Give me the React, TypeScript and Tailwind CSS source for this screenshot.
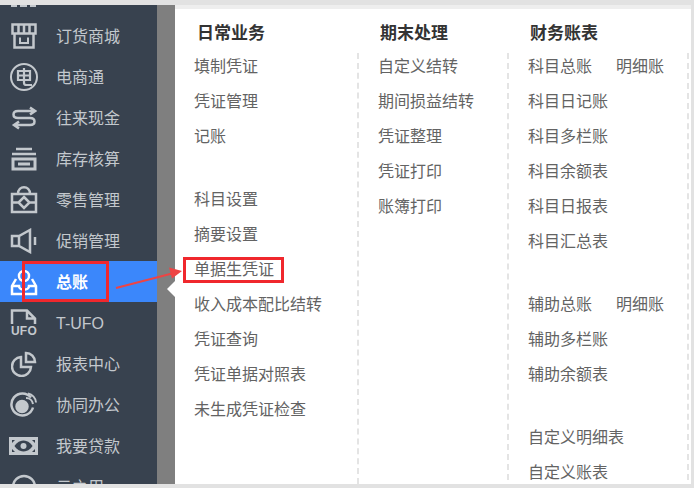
const font = "[font-family:'Liberation_Sans','Noto_Sans_CJK_SC',sans-serif]";

const sw = { fill: "none", stroke: "currentColor", strokeWidth: 2.5 };

const icons: Record<string, React.ReactNode> = {
  shop: (
    <svg width="26" height="26" viewBox="0 0 26 26" {...sw}>
      <path d="M1.500 1.500h23v9h-23zM7.500 1.500v9M13 1.500v9M18.500 1.500v9" />
      <path d="M3.500 10v14.500h19V10" />
      <path d="M9 14.500v5.500h8v-5.500" strokeWidth="2" />
    </svg>
  ),
  dian: (
    <svg width="30" height="28" viewBox="0 0 30 28" fill="none" stroke="currentColor" strokeWidth="2">
      <circle cx="15" cy="14" r="13" />
      <path d="M9 8h12v9H9zM9 12.500h12M15 5v15c0 1.500 1 2 2.500 2H23" strokeWidth="2.200" />
    </svg>
  ),
  swap: (
    <svg width="26" height="24" viewBox="0 0 26 24" fill="none" stroke="currentColor" strokeWidth="2.500">
      <path d="M19 1.500l5 3.500-5 3.500M24 5H7c-6 0-6 7 0 7h12c6 0 6 7 0 7H3M8 15.500L3 19l5 3.500" />
    </svg>
  ),
  stock: (
    <svg width="26" height="24" viewBox="0 0 26 24" {...sw}>
      <path d="M5 2h16M1 7h24" />
      <path d="M2 12h22v10H2zM7 17h12" strokeWidth="3" />
    </svg>
  ),
  retail: (
    <svg width="28" height="28" viewBox="0 0 28 28" {...sw}>
      <path d="M2 8h24v18H2zM8 8c0-9 12-9 12 0" />
      <path d="M14 11l5.500 5.500L14 22l-5.500-5.500zM2 16.500h6M20 16.500h6" />
    </svg>
  ),
  horn: (
    <svg width="28" height="26" viewBox="0 0 28 26" {...sw}>
      <path d="M2 8h7l11-6v22L9 18H2zM9 8v10" />
      <path d="M25 9v8" />
    </svg>
  ),
  ledger: (
    <svg width="28" height="28" viewBox="0 0 28 28" fill="none" stroke="currentColor" strokeWidth="2.500">
      <path d="M6 11L2 18v8h24v-8l-4-7" />
      <path d="M2 18h7c0 5 10 5 10 0h7" />
      <circle cx="14" cy="8" r="5" />
      <path d="M14 4v9" strokeWidth="2" />
    </svg>
  ),
  ufo: (
    <svg width="28" height="28" viewBox="0 0 28 28" fill="none" stroke="currentColor" strokeWidth="2.500">
      <path d="M2 15V1.500h15l8 8V15M17 1.500v8h8" />
      <text x="14" y="26" fill="currentColor" stroke="none" textAnchor="middle" fontSize="12" fontWeight="700" letterSpacing="0.300">
        UFO
      </text>
    </svg>
  ),
  pie: (
    <svg width="26" height="26" viewBox="0 0 26 26" fill="none" stroke="currentColor" strokeWidth="2.500">
      <path d="M10 6a9.500 9.500 0 1 0 10 10H10z" />
      <path d="M15 2a9 9 0 0 1 9 9h-9z" />
    </svg>
  ),
  collab: (
    <svg width="28" height="26" viewBox="0 0 28 26" fill="none" stroke="currentColor" strokeWidth="2.500">
      <path d="M21 5.500a11 11 0 1 0 2 10" />
      <circle cx="12" cy="14.500" r="5.500" fill="currentColor" />
      <path d="M16 6a7 7 0 0 1 7 6M18 1.500a10 10 0 0 1 8 9" strokeWidth="2" />
    </svg>
  ),
  money: (
    <svg width="29" height="18" viewBox="0 0 29 18">
      <path fill="currentColor" fillRule="evenodd" d="M0 0h29v18H0zM14.500 3.500c-5 0-8 4-9 5.500 1 1.500 4 5.500 9 5.500s8-4 9-5.500c-1-1.500-4-5.500-9-5.500zM3 3v3l3-3zM26 3h-3l3 3zM3 15h3l-3-3zM26 15v-3l-3 3z" />
      <circle cx="14.500" cy="9" r="3" fill="currentColor" />
    </svg>
  ),
  cloud: (
    <svg width="26" height="26" viewBox="0 0 26 26" {...sw}>
      <circle cx="13" cy="13" r="11" />
    </svg>
  ),
};

const navItems = [
  { label: "订货商城", icon: "shop" },
  { label: "电商通", icon: "dian" },
  { label: "往来现金", icon: "swap" },
  { label: "库存核算", icon: "stock" },
  { label: "零售管理", icon: "retail" },
  { label: "促销管理", icon: "horn" },
  { label: "总账", icon: "ledger", active: true },
  { label: "T-UFO", icon: "ufo" },
  { label: "报表中心", icon: "pie" },
  { label: "协同办公", icon: "collab" },
  { label: "我要贷款", icon: "money" },
  { label: "云之用", icon: "cloud" },
];

function NavRow({ label, icon, active }: { label: string; icon: string; active?: boolean }) {
  return (
    <div className={`flex h-[41px] shrink-0 items-center ${active ? "bg-[#3b87fb] text-white" : "text-[#c3c8cd]"}`}>
      <div className="flex w-[47px] shrink-0 justify-center">{icons[icon]}</div>
      <span className={`mt-[2px] ml-[9px] text-base ${active ? "font-bold" : ""}`}>{label}</span>
    </div>
  );
}

function Links({ items, className }: { items: (string | null | [string, string])[]; className?: string }) {
  return (
    <div className={className}>
      {items.map((item, i) =>
        item === null ? (
          <div key={i} className="h-7" />
        ) : Array.isArray(item) ? (
          <div key={i} className="flex h-[35px] items-center gap-6 text-base text-[#636363]">
            <span>{item[0]}</span>
            <span>{item[1]}</span>
          </div>
        ) : (
          <div key={i} className="flex h-[35px] items-center text-base text-[#636363]">
            {item}
          </div>
        ),
      )}
    </div>
  );
}

export default function App() {
  return (
    <div className={`relative flex h-[488px] w-[694px] flex-col overflow-hidden bg-white ${font}`}>
      <div className="h-[5px] shrink-0 bg-[#e2e2e2]" />
      <div className="flex min-h-0 flex-1">
        <div className="flex w-[157px] shrink-0 flex-col overflow-hidden bg-[#38424f]">
          {/* bottom of the icon scrolled out above the first row */}
          <svg className="ml-[11px] shrink-0" width="25" height="2" viewBox="0 0 25 2">
            <path d="M0 0h6v2H0zM9 0h7v2H9zM19 0h6v2h-6z" fill="#c3c8cd" />
          </svg>
          <div className="h-2 shrink-0" />
          {navItems.map((item) => (
            <NavRow key={item.label} {...item} />
          ))}
        </div>
        <div className="w-[18px] shrink-0 bg-[#7f7f7f]" />
        <div className="flex min-w-0 flex-1 overflow-hidden border-t-4 border-[#eeeeee] pt-[13px]">
          <div className="w-[182px] shrink-0 pl-[19px]">
            <h3 className="pl-[3px] text-[17px] font-bold leading-[24px] text-[#333333]">日常业务</h3>
            <Links
              className="mt-[3px]"
              items={["填制凭证", "凭证管理", "记账", null, "科目设置", "摘要设置", "单据生凭证", "收入成本配比结转", "凭证查询", "凭证单据对照表", "未生成凭证检查"]}
            />
          </div>
          <div className="flex w-[150px] shrink-0 flex-col">
            <h3 className="pl-[23px] text-[17px] font-bold leading-[24px] text-[#333333]">期末处理</h3>
            <div className="mt-[7px] flex-1 border-l-2 border-dashed border-[#e4e4e4] pl-[19px]">
              <Links className="-mt-1" items={["自定义结转", "期间损益结转", "凭证整理", "凭证打印", "账簿打印"]} />
            </div>
          </div>
          <div className="flex w-[182px] shrink-0 flex-col">
            <h3 className="pl-[23px] text-[17px] font-bold leading-[24px] text-[#333333]">财务账表</h3>
            <div className="mt-[7px] flex-1 border-x-2 border-dashed border-[#e4e4e4] pl-[19px]">
              <Links
                className="-mt-1"
                items={[
                  ["科目总账", "明细账"],
                  "科目日记账",
                  "科目多栏账",
                  "科目余额表",
                  "科目日报表",
                  "科目汇总表",
                  null,
                  ["辅助总账", "明细账"],
                  "辅助多栏账",
                  "辅助余额表",
                  null,
                  "自定义明细表",
                  "自定义账表",
                ]}
              />
            </div>
          </div>
          <div className="min-w-0 flex-1" />
        </div>
        <div className="w-[3px] shrink-0 bg-[#e2e2e2]" />
      </div>
      <div className="h-[4px] shrink-0 bg-[#e2e2e2]" />

      {/* callouts drawn over the screenshot */}
      <div className="absolute top-[261px] left-[22px] h-[41px] w-[87px] border-[3px] border-[#f0282d]" />
      <div className="absolute top-[257px] left-[183px] h-[26px] w-[101px] border-[3px] border-[#f0282d]" />
      <div className="absolute top-[280px] left-[167px] h-0 w-0 border-y-[9px] border-r-[9px] border-y-transparent border-r-white" />
      <svg className="absolute top-[262px] left-[114px]" width="70" height="28" viewBox="0 0 70 28">
        <path d="M2 26L60 11" stroke="#ee4444" strokeWidth="2" />
        <path d="M68 9L55 5.500l3 11z" fill="#ee4444" />
      </svg>
    </div>
  );
}
